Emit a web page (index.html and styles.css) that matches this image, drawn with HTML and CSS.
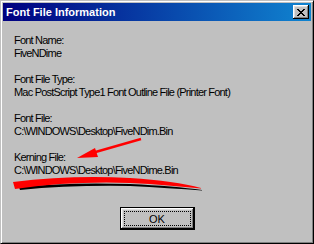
FILE: index.html
```html
<!DOCTYPE html>
<html>
<head>
    <title>Font File Information</title>
    <link rel="stylesheet" href="styles.css">
</head>
<body>
    <div class="window">
        <div class="titlebar">
            <span class="title">Font File Information</span>
            <button class="close-btn" aria-label="Close">
                <svg width="8" height="7" viewBox="0 0 8 7" shape-rendering="crispEdges">
                    <path d="M0 0h2v1h-2zM6 0h2v1h-2zM1 1h2v1h-2zM5 1h2v1h-2zM2 2h4v1h-4zM3 3h2v1h-2zM2 4h4v1h-4zM1 5h2v1h-2zM5 5h2v1h-2zM0 6h2v1h-2zM6 6h2v1h-2z" fill="#000"/>
                </svg>
            </button>
        </div>
        <div class="content">
            <p>Font Name:<br>FiveNDime</p>
            <p>Font File Type:<br>Mac PostScript Type1 Font Outline File (Printer Font)</p>
            <p>Font File:<br>C:\WINDOWS\Desktop\FiveNDim.Bin</p>
            <p>Kerning File:<br>C:\WINDOWS\Desktop\FiveNDime.Bin</p>
        </div>
        <div class="buttons">
            <button class="ok-btn"><span class="focus">OK</span></button>
        </div>

        <!-- red annotation drawn over the dialog -->
        <svg class="markup" width="314" height="244" viewBox="0 0 314 244">
            <path d="M19 187 Q70 182 130 184 Q175 186 202 190 L202 190.6 Q170 188 130 186 Q70 185 20 190 Z" fill="#000"/>
            <path d="M13 182 Q70 175 130 178 Q175 181 201 188 L201 188.6 Q170 185 130 183 Q70 181 15 189 Z" fill="#f00"/>
            <line x1="141" y1="139" x2="92" y2="153" stroke="#f00" stroke-width="2.5"/>
            <polygon points="77,158 95,148 98,157" fill="#f00"/>
        </svg>
    </div>
</body>
</html>
```

FILE: styles.css
```css
body { margin: 0; font-family: "Liberation Sans", Arial, sans-serif; font-size: 11px; }
.window { position: relative; width: 314px; height: 244px; box-sizing: border-box; background: #c0c0c0; padding: 2px;
    border-top: 1px solid #c0c0c0; border-left: 1px solid #c0c0c0; border-right: 1px solid #000; border-bottom: 1px solid #000;
    box-shadow: inset 1px 1px 0 #fff, inset -1px -1px 0 #808080; display: flex; flex-direction: column; }
.titlebar { height: 18px; display: flex; align-items: center; justify-content: space-between; padding: 0 2px 0 3px;
    background: linear-gradient(to right, #000080, #1084d0); }
.title { color: #fff; font-weight: bold; font-size: 11px; }
.close-btn { width: 16px; height: 14px; padding: 0; background: #c0c0c0; border: none; display: flex; align-items: center; justify-content: center;
    box-shadow: inset -1px -1px 0 #000, inset 1px 1px 0 #fff, inset -2px -2px 0 #808080, inset 2px 2px 0 #dfdfdf; }
.content { padding: 13px 0 0 11px; color: #000; letter-spacing: -0.8px; }
.content p { margin: 0 0 13px; line-height: 13px; }
.buttons { display: flex; justify-content: center; margin-top: 17px; }
.ok-btn { width: 75px; height: 23px; padding: 3px; background: #c0c0c0; border: 1px solid #000; font-family: inherit; font-size: 11px; color: #000;
    box-shadow: inset -1px -1px 0 #000, inset 1px 1px 0 #fff, inset -2px -2px 0 #808080, inset 2px 2px 0 #dfdfdf; }
.focus { display: flex; align-items: center; justify-content: center; height: 100%; border: 1px dotted #000; box-sizing: border-box; }
.markup { position: absolute; left: -1px; top: -1px; pointer-events: none; }
```
